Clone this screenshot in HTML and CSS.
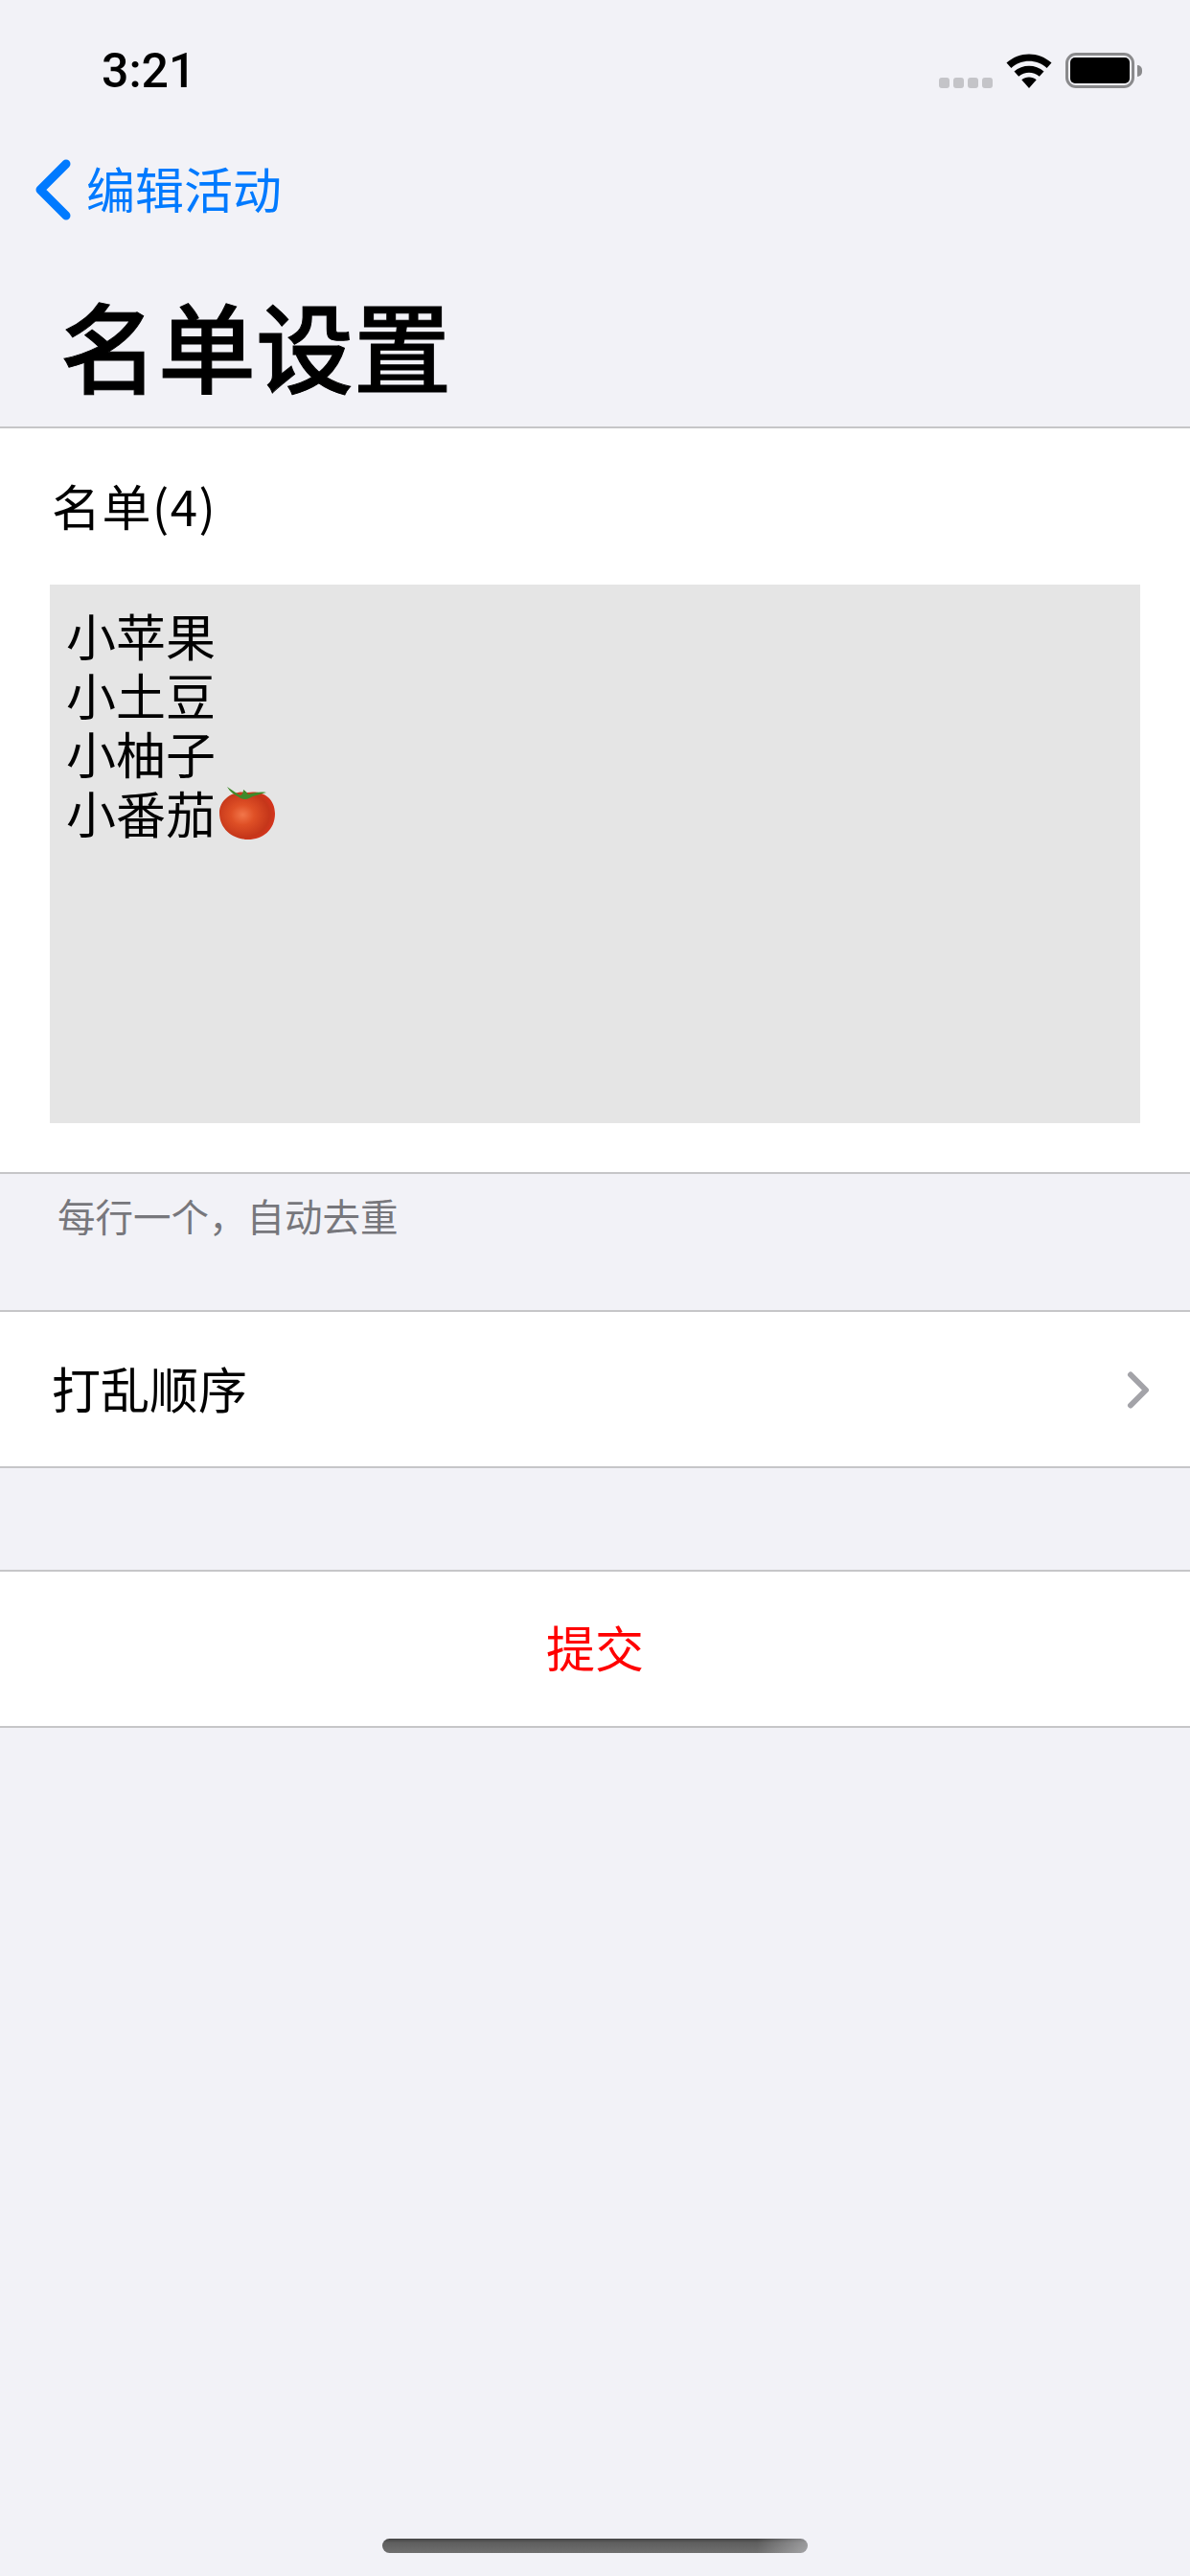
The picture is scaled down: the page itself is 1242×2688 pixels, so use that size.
FILE: index.html
```html
<!DOCTYPE html>
<html lang="zh-CN">
<head>
    <meta charset="UTF-8">
    <meta name="viewport" content="width=device-width, initial-scale=1.0">
    <title>名单设置</title>
    <link rel="stylesheet" href="styles.css">
</head>
<body>
    <div class="status-bar">
        <span class="time">3:21</span>
        <div class="status-icons">
            <div class="signal"><i></i><i></i><i></i><i></i></div>
            <svg class="wifi" width="48" height="36" viewBox="0 0 47 36">
                <path d="M23.500 36 L15.800 27.300 C20.200 23.600 26.800 23.600 31.200 27.300 Z"/>
                <path d="M12.700 23.800 L8 18.500 C16.600 10.800 30.400 10.800 39 18.500 L34.300 23.800 C28 18.500 19 18.500 12.700 23.800 Z"/>
                <path d="M4.900 15 L0 9.600 C13.300 -2.600 33.700 -2.600 47 9.600 L42.100 15 C31.400 5.400 15.600 5.400 4.900 15 Z"/>
            </svg>
            <div class="battery"><div class="battery-fill"></div></div>
            <div class="battery-cap"></div>
        </div>
    </div>

    <div class="nav-bar">
        <svg class="back-chevron" width="38" height="64" viewBox="0 0 38 64">
            <path d="M33 5 L6 32 L33 59" fill="none" stroke="#007aff" stroke-width="9" stroke-linecap="round" stroke-linejoin="round"/>
        </svg>
        <span class="back-label">编辑活动</span>
    </div>

    <h1 class="page-title">名单设置</h1>

    <section class="group list-group">
        <div class="list-label">名单(4)</div>
        <div class="list-box">
            <div>小苹果</div>
            <div>小土豆</div>
            <div>小柚子</div>
            <div class="tomato-line">小番茄<svg class="tomato" width="62" height="56" viewBox="0 0 62 56">
                <defs>
                    <radialGradient id="tomato-skin" cx="0.42" cy="0.48" r="0.6">
                        <stop offset="0" stop-color="#f2764a"/>
                        <stop offset="0.35" stop-color="#df5026"/>
                        <stop offset="0.8" stop-color="#c5361a"/>
                        <stop offset="1" stop-color="#d8341e"/>
                    </radialGradient>
                </defs>
                <path d="M31 6 C46 3 60 11 60 28 C60 45 47 55 32 55 C17 55 2 45 2 27 C2 13 17 3 31 6 Z" fill="url(#tomato-skin)"/>
                <path d="M10 0 C15 3 20 7 24 9 C26 8 27 6 27 3 C29 4 31 6 32 8 C38 6 45 5 51 6 C44 8 38 9 33 12 C29 14 25 13 21 10 C17 8 13 5 10 0 Z" fill="#3f8a2a"/>
            </svg></div>
        </div>
    </section>
    <p class="group-hint">每行一个，自动去重</p>

    <section class="group row shuffle-row">
        <span>打乱顺序</span>
        <svg class="row-chevron" width="26" height="44" viewBox="0 0 26 44">
            <path d="M5 8.500 L21 24.500 L5 40.500" fill="none" stroke="#a3a3a8" stroke-width="6" stroke-linecap="round" stroke-linejoin="round"/>
        </svg>
    </section>

    <section class="group row submit-row">提交</section>

    <div class="home-indicator"></div>
</body>
</html>
```

FILE: styles.css
```css
* {
    box-sizing: border-box;
}

body {
    margin: 0;
    width: 1242px;
    height: 2688px;
    position: relative;
    overflow: hidden;
    background-color: #f2f2f7;
    color: #000;
    font-family: "Noto Sans CJK SC", "Liberation Sans", sans-serif;
}

.status-bar {
    height: 148px;
    padding: 46px 50px 0 106px;
    display: flex;
    justify-content: space-between;
    align-items: flex-start;
}

.time {
    font-family: Roboto, sans-serif;
    font-size: 50px;
    font-weight: 500;
    line-height: 56px;
}

.status-icons {
    display: flex;
    align-items: flex-start;
    padding-top: 9px;
}

.signal {
    display: flex;
    gap: 4px;
    margin: 26px 14px 0 0;
}

.signal i {
    width: 11px;
    height: 11px;
    border-radius: 3px;
    background-color: #c4c4c8;
}

.wifi {
    margin: 1px 14px 0 0;
}

.battery {
    width: 72px;
    height: 37px;
    padding: 2px;
    border: 3px solid #8a8a8c;
    border-radius: 11px;
}

.battery-fill {
    height: 100%;
    background-color: #000;
    border-radius: 5px;
}

.battery-cap {
    width: 5px;
    height: 12px;
    margin: 13px 0 0 3px;
    background-color: #8a8a8c;
    border-radius: 0 6px 6px 0;
}

.nav-bar {
    height: 100px;
    padding-left: 36px;
    display: flex;
    align-items: center;
    color: #007aff;
}

.back-label {
    margin-left: 16px;
    padding-bottom: 4px;
    font-size: 51px;
}

.page-title {
    margin: 0;
    height: 197px;
    padding: 53px 0 0 63px;
    font-size: 102px;
    font-weight: 500;
    -webkit-text-stroke: 1px #000;
    line-height: 116px;
}

.group {
    background-color: #fff;
    border-top: 2px solid #c6c6c8;
    border-bottom: 2px solid #c6c6c8;
    font-size: 51px;
}

.list-group {
    height: 780px;
    padding: 0 52px;
}

.list-label {
    height: 163px;
    padding: 43px 0 0 2px;
    line-height: 74px;
    letter-spacing: 1.500px;
}

.list-box {
    height: 562px;
    padding: 22px 17px;
    background-color: #e5e5e5;
    font-size: 52px;
    line-height: 61.500px;
}

.tomato-line {
    display: flex;
    align-items: center;
}

.tomato {
    margin: 4px 0 0 2px;
}

.group-hint {
    margin: 0;
    height: 142px;
    padding: 14px 0 0 60px;
    font-size: 39.500px;
    line-height: 58px;
    color: #77777c;
}

.row {
    height: 165px;
    padding: 0 41px 3px 54px;
    display: flex;
    align-items: center;
    justify-content: space-between;
}

.submit-row {
    margin-top: 106px;
    justify-content: center;
    padding: 0 0 5px;
    color: #ff0000;
}

.home-indicator {
    position: absolute;
    left: 399px;
    top: 2649px;
    width: 444px;
    height: 15px;
    border-radius: 8px;
    background: linear-gradient(to right, rgba(242, 242, 247, 0) 88%, rgba(242, 242, 247, 0.4) 100%),
        linear-gradient(to bottom, #444 0, #5f5f5f 30%, #6f6f6f 100%);
}
```
